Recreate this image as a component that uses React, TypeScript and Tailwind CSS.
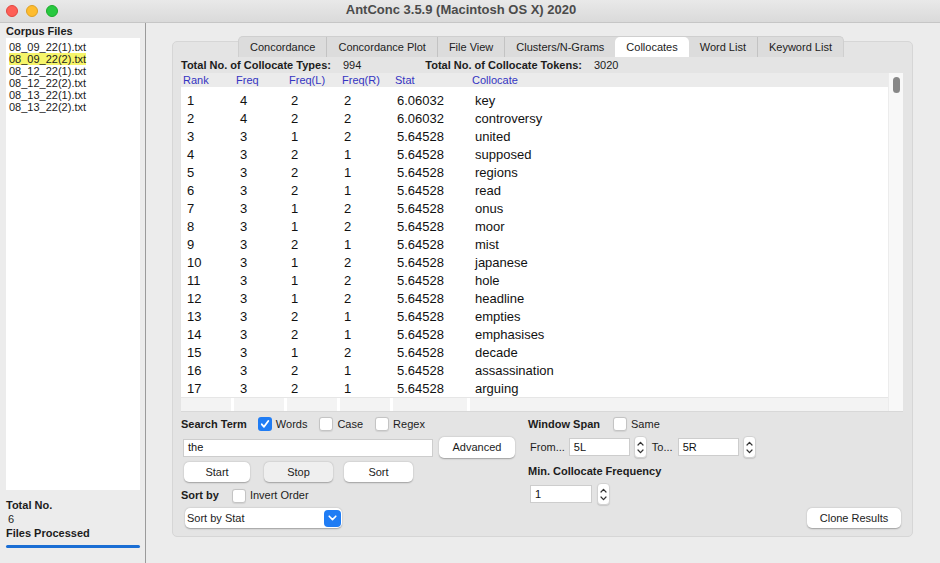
import React from 'react';

const files = ['08_09_22(1).txt', '08_09_22(2).txt', '08_12_22(1).txt', '08_12_22(2).txt', '08_13_22(1).txt', '08_13_22(2).txt'];

const tabs = ['Concordance', 'Concordance Plot', 'File View', 'Clusters/N-Grams', 'Collocates', 'Word List', 'Keyword List'];

const rows: [string, string, string, string, string, string][] = [
  ['1', '4', '2', '2', '6.06032', 'key'],
  ['2', '4', '2', '2', '6.06032', 'controversy'],
  ['3', '3', '1', '2', '5.64528', 'united'],
  ['4', '3', '2', '1', '5.64528', 'supposed'],
  ['5', '3', '2', '1', '5.64528', 'regions'],
  ['6', '3', '2', '1', '5.64528', 'read'],
  ['7', '3', '1', '2', '5.64528', 'onus'],
  ['8', '3', '1', '2', '5.64528', 'moor'],
  ['9', '3', '2', '1', '5.64528', 'mist'],
  ['10', '3', '1', '2', '5.64528', 'japanese'],
  ['11', '3', '1', '2', '5.64528', 'hole'],
  ['12', '3', '1', '2', '5.64528', 'headline'],
  ['13', '3', '2', '1', '5.64528', 'empties'],
  ['14', '3', '2', '1', '5.64528', 'emphasises'],
  ['15', '3', '1', '2', '5.64528', 'decade'],
  ['16', '3', '2', '1', '5.64528', 'assassination'],
  ['17', '3', '2', '1', '5.64528', 'arguing'],
];

const headers = ['Rank', 'Freq', 'Freq(L)', 'Freq(R)', 'Stat', 'Collocate'];
// column widths incl. separators
const colW = ['w-[53px]', 'w-[53px]', 'w-[53px]', 'w-[53px]', 'w-[77px]', 'flex-1'];

const Checkbox = ({ checked = false }: { checked?: boolean }) =>
  checked ? (
    <span className="w-[14px] h-[14px] rounded-[3px] bg-[#1f7cf4] flex items-center justify-center shrink-0">
      <svg width="10" height="10" viewBox="0 0 10 10" fill="none">
        <path d="M1.8 5.3 L4 7.8 L8.3 2" stroke="white" strokeWidth="1.8" strokeLinecap="round" strokeLinejoin="round" />
      </svg>
    </span>
  ) : (
    <span className="block w-[14px] h-[14px] rounded-[3px] bg-white border border-[#c4c4c4] shadow-[0_0.5px_1px_rgba(0,0,0,0.08)] shrink-0" />
  );

const Stepper = () => (
  <span className="w-[13px] h-[22px] rounded-[4px] bg-white border border-[#d2d2d2] shadow-[0_1px_1px_rgba(0,0,0,0.12)] flex flex-col items-center justify-center gap-[3px] shrink-0">
    <svg width="7" height="5" viewBox="0 0 7 5" fill="none">
      <path d="M1 4 L3.5 1.3 L6 4" stroke="#333" strokeWidth="1.2" strokeLinecap="round" strokeLinejoin="round" />
    </svg>
    <svg width="7" height="5" viewBox="0 0 7 5" fill="none">
      <path d="M1 1 L3.5 3.7 L6 1" stroke="#333" strokeWidth="1.2" strokeLinecap="round" strokeLinejoin="round" />
    </svg>
  </span>
);

const Button = ({ label, w, dim = false }: { label: string; w: string; dim?: boolean }) => (
  <span
    className={`${w} h-[20px] rounded-[5px] flex items-center justify-center text-[11px] text-[#222] shadow-[0_0.5px_1.5px_rgba(0,0,0,0.3)] ${
      dim ? 'bg-[#efefef]' : 'bg-white'
    }`}
  >
    {label}
  </span>
);

const Field = ({ value, w }: { value: string; w: string }) => (
  <span className={`${w} h-[18px] bg-white border border-[#cdcdcd] flex items-center pl-[4px] text-[11px] text-[#111]`}>{value}</span>
);

export default function App() {
  return (
    <div className="w-[940px] h-[563px] bg-[#ececec] flex flex-col overflow-hidden text-[#1c1c1c]" style={{ fontFamily: '"Liberation Sans", Arial, sans-serif' }}>
      {/* Title bar */}
      <div className="h-[23px] shrink-0 bg-gradient-to-b from-[#e9e9e9] to-[#dadada] border-b border-[#c6c6c6] flex items-center relative">
        <div className="flex items-center gap-[8px] pl-[6px]">
          <span className="w-[12px] h-[12px] rounded-full bg-[#fe5f57] border border-[#e2463f]" />
          <span className="w-[12px] h-[12px] rounded-full bg-[#febc2e] border border-[#dea123]" />
          <span className="w-[12px] h-[12px] rounded-full bg-[#28c840] border border-[#1aab29]" />
        </div>
        <div className="flex-1 text-center pr-[76px] -mt-[2px] text-[13px] font-bold text-[#4b4b4b]">AntConc 3.5.9 (Macintosh OS X) 2020</div>
      </div>

      <div className="flex flex-1 min-h-0">
        {/* Left: corpus files */}
        <div className="w-[146px] shrink-0 border-r border-[#9b9b9b] flex flex-col px-[6px]">
          <div className="text-[11px] font-bold h-[14px] mt-[1px] leading-[14px]">Corpus Files</div>
          <div className="w-[134px] h-[452px] bg-white pt-[3px] pl-[3px]">
            {files.map((f, i) => (
              <div key={f} className="h-[12px] leading-[12px] text-[11px]">
                <span className={i === 1 ? 'bg-[#f6f56a]' : ''}>{f}</span>
              </div>
            ))}
          </div>
          <div className="text-[11px] font-bold leading-[14px] mt-[8px]">Total No.</div>
          <div className="text-[11px] leading-[14px] pl-[2px]">6</div>
          <div className="text-[11px] font-bold leading-[14px]">Files Processed</div>
          <div className="w-[134px] h-[3px] rounded-full bg-[#1a6ed4] mt-[5px]" />
        </div>

        {/* Right: tool pane */}
        <div className="flex-1 pl-[26px] pt-[13px]">
          <div className="relative z-10 ml-[66px] flex h-[21px] w-max rounded-t-[5px] bg-[#dcdcdc] border border-b-0 border-[#cfcfcf] text-[11px] text-[#222]">
            {tabs.map((t, i) => (
              <div
                key={t}
                className={`px-[11px] flex items-center ${
                  t === 'Collocates' ? 'bg-white rounded-t-[5px]' : ''
                } ${i > 0 && t !== 'Collocates' && tabs[i - 1] !== 'Collocates' ? 'border-l border-[#c3c3c3]' : ''}`}
              >
                {t}
              </div>
            ))}
          </div>

          <div className="-mt-[16px] w-[741px] h-[496px] rounded-[5px] bg-[#e4e4e4] border border-[#d6d6d6] pt-[15px] pl-[8px] pr-[9px] flex flex-col">
            <div className="h-[16px] flex items-center text-[11px]">
              <span className="font-bold">Total No. of Collocate Types:</span>
              <span className="ml-[12px]">994</span>
              <span className="font-bold ml-[64px]">Total No. of Collocate Tokens:</span>
              <span className="ml-[12px]">3020</span>
            </div>

            {/* Table */}
            <div className="h-[339px] bg-white flex border-b border-[#d8d8d8]">
              <div className="flex-1 flex flex-col">
                <div className="h-[14px] bg-[#ebebeb] flex text-[11px] text-[#3434c2]">
                  {headers.map((h, i) => (
                    <div key={h} className={`${colW[i]} pl-[2px] leading-[14px]`}>
                      {h}
                    </div>
                  ))}
                </div>
                <div className="h-[310px] overflow-hidden pt-[5px]">
                  {rows.map((r) => (
                    <div key={r[0]} className="h-[18px] flex items-center text-[13px] text-[#111]">
                      {r.map((c, i) => (
                        <div key={i} className={`${colW[i]} ${i === 2 || i === 3 ? 'pl-[4px]' : i === 5 ? 'pl-[5px]' : i === 4 ? 'pl-[4px]' : 'pl-[6px]'}`}>
                          {c}
                        </div>
                      ))}
                    </div>
                  ))}
                </div>
                <div className="h-[14px] flex gap-[3px] border-t border-[#e6e6e6]">
                  {colW.map((w, i) => (
                    <div key={i} className={`${i < 5 ? (i === 4 ? 'w-[74px]' : 'w-[50px]') : 'flex-1'} bg-[#f3f3f3]`} />
                  ))}
                </div>
              </div>
              <div className="w-[15px] bg-[#f8f8f8] border-l border-[#ececec] flex justify-center pt-[4px]">
                <span className="w-[7px] h-[16px] rounded-full bg-[#878787]" />
              </div>
            </div>

            {/* Controls */}
            <div className="flex mt-[4px] text-[11px]">
              <div className="w-[347px] flex flex-col">
                <div className="h-[16px] flex items-center">
                  <span className="font-bold">Search Term</span>
                  <span className="ml-[11px]"><Checkbox checked /></span>
                  <span className="ml-[4px]">Words</span>
                  <span className="ml-[12px]"><Checkbox /></span>
                  <span className="ml-[4px]">Case</span>
                  <span className="ml-[12px]"><Checkbox /></span>
                  <span className="ml-[4px]">Regex</span>
                </div>
                <div className="flex items-center h-[21px] mt-[5px] pl-[2px]">
                  <Field value="the" w="w-[250px]" />
                  <span className="ml-[6px]">
                    <span className="w-[76px] h-[21px] rounded-[5px] bg-white flex items-center justify-center shadow-[0_0.5px_1.5px_rgba(0,0,0,0.3)]">Advanced</span>
                  </span>
                </div>
                <div className="flex items-center h-[20px] mt-[4px] pl-[3px]">
                  <Button label="Start" w="w-[66px]" />
                  <span className="ml-[14px]"><Button label="Stop" w="w-[69px]" dim /></span>
                  <span className="ml-[11px]"><Button label="Sort" w="w-[69px]" /></span>
                </div>
                <div className="h-[15px] flex items-center mt-[6px]">
                  <span className="font-bold">Sort by</span>
                  <span className="ml-[13px]"><Checkbox /></span>
                  <span className="ml-[4px]">Invert Order</span>
                </div>
                <div className="mt-[5px] pl-[4px]">
                  <div className="w-[157px] h-[20px] rounded-[5px] bg-white shadow-[0_0.5px_1.5px_rgba(0,0,0,0.3)] flex items-center justify-between pl-[2px] pr-[1px]">
                    <span>Sort by Stat</span>
                    <span className="w-[17px] h-[17px] rounded-[4px] bg-[#1f7cf4] flex items-center justify-center">
                      <svg width="9" height="6" viewBox="0 0 9 6" fill="none">
                        <path d="M1.2 1.2 L4.5 4.6 L7.8 1.2" stroke="white" strokeWidth="1.6" strokeLinecap="round" strokeLinejoin="round" />
                      </svg>
                    </span>
                  </div>
                </div>
              </div>

              <div className="flex-1 flex flex-col">
                <div className="h-[16px] flex items-center">
                  <span className="font-bold">Window Span</span>
                  <span className="ml-[13px]"><Checkbox /></span>
                  <span className="ml-[4px]">Same</span>
                </div>
                <div className="h-[22px] flex items-center mt-[4px] pl-[2px]">
                  <span>From...</span>
                  <span className="ml-[4px]"><Field value="5L" w="w-[61px]" /></span>
                  <span className="ml-[4px]"><Stepper /></span>
                  <span className="ml-[5px]">To...</span>
                  <span className="ml-[5px]"><Field value="5R" w="w-[61px]" /></span>
                  <span className="ml-[4px]"><Stepper /></span>
                </div>
                <div className="h-[14px] flex items-center mt-[6px] font-bold">Min. Collocate Frequency</div>
                <div className="h-[22px] flex items-center mt-[5px] pl-[2px]">
                  <Field value="1" w="w-[62px]" />
                  <span className="ml-[5px]"><Stepper /></span>
                </div>
                <div className="flex justify-end mt-[3px] pr-[2px]">
                  <Button label="Clone Results" w="w-[94px]" />
                </div>
              </div>
            </div>
          </div>
        </div>
      </div>
    </div>
  );
}
